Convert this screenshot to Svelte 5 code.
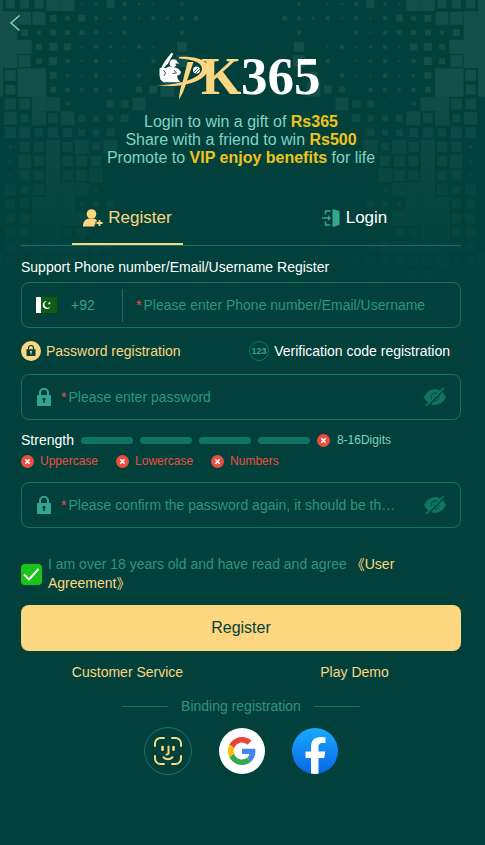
<script lang="ts">
  type Method = 'password' | 'code';

  let tab = $state<'register' | 'login'>('register');
  let method = $state<Method>('password');
  let account = $state('');
  let password = $state('');
  let confirmation = $state('');
  let showPassword = $state(false);
  let showConfirmation = $state(false);
  let agreed = $state(true);

  const rules = ['Uppercase', 'Lowercase', 'Numbers'];

  // Mosaic backdrop: one hex digit per cell, giving the side of the square.
  // Only the left half is listed, the right half mirrors it.
  const mosaic = [
    'f999ee23842203',
    'ffdd75742424345',
    'ff7465542400040',
    'fff687243242 a',
    'ffc6842432 43c',
    'fbff7324224 8',
    'faff64344 68e',
    '0bbfe42278d',
    '0d8fae7668',
    '0bb8a9768',
    '03aaeae8e',
    '03dafaba',
    '03a9fabe',
    '0b8bffe4',
    '099fff467',
    '099ffff4',
    '0a9ff8932',
    '099ffeda8',
    'fa7eabb9a7',
    'fab9ccaa8',
  ];
  const pitch = 14.3;
  const axis = 240.5;

  const tiles = mosaic.flatMap((row, r) =>
    [...row].flatMap((cell, c) => {
      const side = parseInt(cell, 16) || 0;
      if (!side) return [];
      const size = side === 15 ? pitch : side;
      const cx = -4 + c * pitch;
      const y = 4 + r * 14.28 - size / 2;
      const opacity = r < 7 ? 0.07 : Math.max(0.005, 0.058 - (r - 7) * 0.0042);
      return [
        { x: cx - size / 2, y, size, opacity },
        { x: 2 * axis - cx - size / 2, y, size, opacity },
      ];
    })
  );
</script>

{#snippet lock()}
  <svg class="lock" viewBox="0 0 14 18" width="14" height="18" aria-hidden="true">
    <path d="M3 8V4.8a4 4 0 0 1 8 0V8" fill="none" stroke="currentColor" stroke-width="2" />
    <path
      fill="currentColor"
      fill-rule="evenodd"
      d="M1 7h12a1 1 0 0 1 1 1v9a1 1 0 0 1-1 1H1a1 1 0 0 1-1-1V8a1 1 0 0 1 1-1Zm6 2.8a1.6 1.6 0 0 0-.8 3V15h1.6v-2.2a1.6 1.6 0 0 0-.8-3Z"
    />
  </svg>
{/snippet}

{#snippet eye()}
  <svg viewBox="0 0 24 20" width="24" height="20" aria-hidden="true">
    <path
      fill="currentColor"
      fill-rule="evenodd"
      d="M1 10C3.400 4.800 7.200 2.200 12 2.200S20.600 4.800 23 10C20.600 15.200 16.800 17.800 12 17.800S3.400 15.200 1 10ZM12 5.600a4.400 4.400 0 1 0 0 8.800 4.400 4.400 0 0 0 0-8.800Z"
    />
    <circle cx="12" cy="10" r="2.500" fill="none" stroke="currentColor" stroke-width="2" />
    <path d="M4.200 19.500 21.200 2" stroke="#02413b" stroke-width="2" />
    <path d="M3 18.800 21 .8" stroke="currentColor" stroke-width="1.800" />
  </svg>
{/snippet}

{#snippet cross()}
  <svg class="cross" viewBox="0 0 13 13" width="13" height="13" aria-hidden="true">
    <circle cx="6.500" cy="6.500" r="6.500" fill="#ea4e3d" />
    <path d="m4.300 4.300 4.400 4.400m0-4.400-4.400 4.400" stroke="#fff" stroke-width="1.600" />
  </svg>
{/snippet}

<main class="page">
  <svg class="mosaic" viewBox="0 0 485 300" aria-hidden="true">
    {#each tiles as t}
      <rect x={t.x} y={t.y} width={t.size} height={t.size} fill="#fff" fill-opacity={t.opacity} />
    {/each}
  </svg>

  <header class="topbar">
    <button class="back" type="button" aria-label="Back">
      <svg viewBox="0 0 12 18" width="12" height="18" aria-hidden="true">
        <path d="M10.500 1.500 2 9l8.500 7.500" fill="none" stroke="#7fd3c4" stroke-width="1.500" />
      </svg>
    </button>
  </header>

  <div class="content">
    <svg class="logo" viewBox="0 -8 168 66" width="168" height="66" role="img" aria-label="PK365">
      <g fill="#fff">
        <path d="m14.500.8 1.800 1L11 11.500 6.500 16l-1.800-1.200L8 9Z" />
        <path d="M12.500 12c0-3 1.800-4.800 4.200-4.800 2 0 3.300 1.300 3.600 2.800l2.200 1.500h-4l.5 2.500-2.500 1.200c-2 0-4-1.200-4-3.200Z" />
        <path d="m2.500 16.500 3-1.500 3 1 4-1.500 4 .5 5 1.700 2.500 3.300-1 2.500-3 1.200.8 3.200 2.800 3.400H6.500l-3-2.600-1-4.500Z" />
      </g>
      <path d="m6.500 18 2 3-1.500 3m10-6 2.500 3-4 .5" fill="none" stroke="#02413b" stroke-width=".8" />
      <path d="M22 5C40 4 52 9 51 17 50 29 25 37 0 33 22 33.500 44 26 45 17.500 45.500 11 38 7.500 22 6.500Z" fill="#fdd680" />
      <path d="M30.500 10h6L29.500 30c-2 7-4.500 13-7.500 17.500 0-5 1.500-12 4-19Z" fill="#fdd680" />
      <circle cx="39.500" cy="18" r="3.500" fill="#fff" />
      <path d="m37 20 4-4m-2 5 4-4" stroke="#02413b" stroke-width=".8" />
      <text class="logo-text" x="44" y="42" font-size="52" fill="#fdd680">K</text>
      <text class="logo-text" x="84" y="42" font-size="53" fill="#fff">365</text>
    </svg>

    <p class="promo">
      Login to win a gift of <strong>Rs365</strong><br />
      Share with a friend to win <strong>Rs500</strong><br />
      Promote to <strong>VIP enjoy benefits</strong> for life
    </p>

    <div class="tabs">
      <div class="pair" role="tablist">
        <button
          class="tab"
          class:active={tab === 'register'}
          type="button"
          role="tab"
          aria-selected={tab === 'register'}
          onclick={() => (tab = 'register')}
        >
          <svg viewBox="0 0 20 18" width="20" height="18" aria-hidden="true">
            <circle cx="8.500" cy="5" r="4.800" fill="currentColor" />
            <path fill="currentColor" d="M5.500 9.800h6c1.500.7 2.400 1.600 2.800 2.700h-1.800v3h-1V17.500H0C0 13 2 10.500 5.500 9.800Z" />
            <path d="M16.500 11v6m-3-3h6" stroke="currentColor" stroke-width="1.800" />
          </svg>
          Register
        </button>
        <button
          class="tab"
          class:active={tab === 'login'}
          type="button"
          role="tab"
          aria-selected={tab === 'login'}
          onclick={() => (tab = 'login')}
        >
          <svg class="door" viewBox="0 0 19 18" width="19" height="18" aria-hidden="true">
            <path d="M3.500 5.500V2h5m0 14h-5v-3.500M0 9h7" fill="none" stroke="currentColor" stroke-width="1.500" />
            <path d="m6 6 3 3-3 3Z" fill="currentColor" />
            <path d="m10.500 0 7 2v14l-7 2Z" fill="currentColor" />
          </svg>
          Login
        </button>
      </div>
    </div>

    <form onsubmit={(e) => e.preventDefault()}>
      <label class="caption" for="account">Support Phone number/Email/Username Register</label>
      <div class="field">
        <button class="country" type="button" aria-label="Country code +92">
          <svg viewBox="0 0 21 16" width="21" height="16" aria-hidden="true">
            <path fill="#0c5e10" d="M0 0h21v16H0z" />
            <path fill="#fff" d="M0 0h5v16H0z" />
            <path fill="#fff" d="M11.500 4a4 4 0 1 0 3 5.500A3.400 3.400 0 1 1 11.500 4ZM13 4.500l.6 1.200 1.400-.3-.9 1 .6 1.100-1.200-.5-1 .8.200-1.300-1.200-.6 1.300-.2Z" />
          </svg>
          <span>+92</span>
        </button>
        <span class="star">*</span>
        <input id="account" type="text" placeholder="Please enter Phone number/Email/Username" bind:value={account} />
      </div>

      <div class="methods">
        <label class="method" class:chosen={method === 'password'}>
          <input class="hidden-radio" type="radio" name="method" value="password" bind:group={method} />
          <svg viewBox="0 0 20 20" width="20" height="20" aria-hidden="true">
            <circle cx="10" cy="10" r="10" fill="#fdd680" />
            <path d="M7.500 8.500V7a2.500 2.500 0 0 1 5 0v1.500" fill="none" stroke="#02413b" stroke-width="1.200" />
            <path fill="#02413b" fill-rule="evenodd" d="M5.500 8.200h9V15h-9Zm4.500 1.500a1 1 0 0 0-.5 1.900v1.600h1v-1.600a1 1 0 0 0-.5-1.900Z" />
          </svg>
          Password registration
        </label>
        <label class="method" class:chosen={method === 'code'}>
          <input class="hidden-radio" type="radio" name="method" value="code" bind:group={method} />
          <span class="digits" aria-hidden="true">123</span>
          Verification code registration
        </label>
      </div>

      <div class="field secret">
        {@render lock()}
        <span class="star">*</span>
        <input
          type={showPassword ? 'text' : 'password'}
          aria-label="Password"
          placeholder="Please enter password"
          bind:value={password}
        />
        <button class="eye" type="button" aria-label="Show password" onclick={() => (showPassword = !showPassword)}>
          {@render eye()}
        </button>
      </div>

      <div class="strength">
        <span class="strength-label">Strength</span>
        {#each [1, 2, 3, 4] as step (step)}
          <span class="bar"></span>
        {/each}
        {@render cross()}
        <span class="length">8-16Digits</span>
      </div>
      <ul class="rules">
        {#each rules as rule}
          <li>{@render cross()}{rule}</li>
        {/each}
      </ul>

      <div class="field secret">
        {@render lock()}
        <span class="star">*</span>
        <input
          type={showConfirmation ? 'text' : 'password'}
          aria-label="Confirm password"
          placeholder="Please confirm the password again, it should be the same"
          bind:value={confirmation}
        />
        <button class="eye" type="button" aria-label="Show confirmation" onclick={() => (showConfirmation = !showConfirmation)}>
          {@render eye()}
        </button>
      </div>

      <div class="agree">
        <span class="tick">
          <input id="agree" type="checkbox" bind:checked={agreed} />
          {#if agreed}
            <svg viewBox="0 0 21 21" width="21" height="21" aria-hidden="true">
              <path d="m3 10.500 5 5L17.500 5" fill="none" stroke="#fff" stroke-width="2" />
            </svg>
          {/if}
        </span>
        <label for="agree">
          I am over 18 years old and have read and agree <a href="#agreement">《User Agreement》</a>
        </label>
      </div>

      <button class="submit" type="submit">Register</button>
    </form>

    <nav class="pair links">
      <a href="#service">Customer Service</a>
      <a href="#demo">Play Demo</a>
    </nav>

    <div class="binding">Binding registration</div>

    <div class="providers">
      <button class="provider face" type="button" aria-label="Face ID">
        <svg viewBox="0 0 28 28" width="28" height="28" aria-hidden="true">
          <g fill="none" stroke="#fdd680" stroke-width="2" stroke-linecap="round">
            <path d="M1 9V6.500A5.500 5.500 0 0 1 6.500 1H10M18 1h3.500A5.500 5.500 0 0 1 27 6.500V9M27 19v2.500a5.500 5.500 0 0 1-5.500 5.500H18M10 27H6.500A5.500 5.500 0 0 1 1 21.500V19" />
            <path d="M8.500 10v2.800M19.500 10v2.800" stroke-width="2.600" />
            <path d="M14.500 9.500v6.300c0 1-.6 1.600-2 1.600M9.500 20.300c2.500 2.500 6.500 2.500 9 0" />
          </g>
        </svg>
      </button>
      <button class="provider google" type="button" aria-label="Google">
        <svg viewBox="0 0 48 48" width="28" height="28" aria-hidden="true">
          <path fill="#EA4335" d="M24 9.500c3.540 0 6.710 1.220 9.210 3.600l6.850-6.850C35.900 2.380 30.470 0 24 0 14.620 0 6.510 5.380 2.560 13.220l7.980 6.190C12.430 13.720 17.740 9.500 24 9.500z" />
          <path fill="#4285F4" d="M46.980 24.550c0-1.570-.15-3.090-.38-4.550H24v9.020h12.940c-.58 2.960-2.260 5.480-4.780 7.180l7.730 6c4.510-4.180 7.090-10.360 7.090-17.650z" />
          <path fill="#FBBC05" d="M10.530 28.590c-.48-1.450-.76-2.990-.76-4.590s.27-3.140.76-4.590l-7.980-6.190C.92 16.460 0 20.120 0 24c0 3.880.92 7.540 2.560 10.780l7.970-6.190z" />
          <path fill="#34A853" d="M24 48c6.480 0 11.930-2.130 15.890-5.810l-7.730-6c-2.150 1.450-4.920 2.300-8.160 2.300-6.260 0-11.570-4.220-13.470-9.910l-7.980 6.190C6.510 42.620 14.620 48 24 48z" />
        </svg>
      </button>
      <button class="provider facebook" type="button" aria-label="Facebook">
        <svg viewBox="0 0 46 46" width="46" height="46" aria-hidden="true">
          <path fill="#fff" d="M19 46V30h-5.500v-6.500H19V19c0-6.500 3.500-10 9.500-10 2 0 3.800.2 5 .5V15h-3c-3.200 0-4 1.800-4 4.200v4.300h6.800L32.200 30h-5.700v16Z" />
        </svg>
      </button>
    </div>
  </div>
</main>

<style>
  :global(body) {
    background: #02413b;
  }

  .page {
    position: relative;
    min-height: 100vh;
    box-sizing: border-box;
    background: #02413b;
    font-family: 'Liberation Sans', Arial, 'Noto Sans CJK SC', sans-serif;
    font-size: 14px;
    color: #fff;
    overflow: hidden;
  }

  .mosaic {
    position: absolute;
    top: 0;
    left: 0;
    width: 100%;
  }

  button {
    padding: 0;
    border: 0;
    background: none;
    color: inherit;
    font: inherit;
    cursor: pointer;
  }

  svg {
    display: block;
    flex: none;
  }

  a {
    color: #fdd680;
    text-decoration: none;
  }

  .topbar {
    position: relative;
    display: flex;
    align-items: center;
    box-sizing: border-box;
    height: 44px;
    padding: 2px 9px 0;
  }

  .content {
    position: relative;
    padding: 0 24px 24px 21px;
  }

  .logo {
    margin: 0 auto;
  }

  .logo-text {
    font-family: 'Liberation Serif', 'Times New Roman', serif;
    font-weight: bold;
  }

  .promo {
    margin: 3px 0 0;
    text-align: center;
    font-size: 16px;
    line-height: 18px;
    color: #7fd3c4;
  }

  .promo strong {
    color: #f0c419;
  }

  .tabs {
    margin-top: 26px;
    border-bottom: 1px solid #0f7465;
  }

  .pair {
    display: grid;
    grid-template-columns: 1fr 1fr;
    justify-items: center;
    margin: 0 -7px;
  }

  .tab {
    display: flex;
    align-items: center;
    justify-content: center;
    gap: 5px;
    min-width: 111px;
    height: 52px;
    border-bottom: 2px solid transparent;
    font-size: 17px;
  }

  .tab.active {
    color: #fdd680;
    border-color: #fdd680;
  }

  .door {
    color: #37a392;
  }

  .caption {
    display: block;
    margin-top: 12px;
    line-height: 18px;
  }

  .field {
    display: flex;
    align-items: center;
    box-sizing: border-box;
    height: 46px;
    margin-top: 6px;
    padding: 0 13px 0 14px;
    border: 1px solid #0f7465;
    border-radius: 8px;
    background: #02413b;
    color: #37a392;
  }

  .field input {
    flex: 1;
    min-width: 0;
    padding: 0;
    border: 0;
    outline: none;
    background: none;
    color: #fff;
    font: inherit;
    text-overflow: ellipsis;
  }

  .field input::placeholder {
    color: #2f9384;
    opacity: 1;
  }

  .star {
    margin-right: 2px;
    color: #ea4e3d;
  }

  .country {
    display: flex;
    align-items: center;
    gap: 14px;
    width: 87px;
    height: 33px;
    margin-right: 13px;
    border-right: 1px solid #0f7465;
  }

  .methods {
    display: flex;
    justify-content: space-between;
    margin-top: 13px;
    padding-right: 11px;
  }

  .method {
    display: flex;
    align-items: center;
    gap: 5px;
    height: 20px;
    cursor: pointer;
  }

  .method.chosen {
    color: #fdd680;
  }

  .hidden-radio {
    position: absolute;
    opacity: 0;
  }

  .digits {
    box-sizing: border-box;
    width: 20px;
    height: 20px;
    border: 1px solid #0f7465;
    border-radius: 50%;
    color: #37a392;
    font-size: 9px;
    font-weight: bold;
    line-height: 18px;
    text-align: center;
  }

  .secret {
    margin-top: 13px;
    padding-left: 15px;
  }

  .lock {
    margin-right: 10px;
  }

  .eye {
    margin-left: 24px;
    color: #0f7465;
  }

  .strength {
    display: flex;
    align-items: center;
    gap: 7px;
    height: 18px;
    margin-top: 11px;
  }

  .bar {
    flex: 0 1 52px;
    height: 7px;
    border-radius: 4px;
    background: #0f7465;
  }

  .length {
    font-size: 12px;
    color: #7fd3c4;
  }

  .rules {
    display: flex;
    gap: 18px;
    margin: 4px 0 0;
    padding: 0;
    list-style: none;
    font-size: 12px;
    line-height: 16px;
    color: #ea4e3d;
  }

  .rules li {
    display: flex;
    align-items: center;
    gap: 6px;
  }

  .agree {
    display: flex;
    align-items: center;
    gap: 6px;
    margin-top: 27px;
    line-height: 19px;
    color: #2f9384;
  }

  .agree label {
    flex: 1;
    padding-right: 44px;
  }

  .tick {
    display: grid;
  }

  .tick > * {
    grid-area: 1 / 1;
  }

  .tick svg {
    pointer-events: none;
  }

  .tick input {
    appearance: none;
    width: 21px;
    height: 21px;
    margin: 0;
    border-radius: 4px;
    background: #1ac41a;
  }

  .submit {
    display: block;
    width: 100%;
    height: 46px;
    margin-top: 12px;
    border-radius: 8px;
    background: #fdd680;
    color: #02413b;
    font-size: 16px;
  }

  .links {
    margin-top: 12px;
    line-height: 18px;
  }

  .binding {
    display: flex;
    align-items: center;
    justify-content: center;
    gap: 13px;
    margin-top: 16px;
    line-height: 18px;
    color: #2f9384;
  }

  .binding::before,
  .binding::after {
    content: '';
    width: 46px;
    border-top: 1px solid #0f7465;
  }

  .providers {
    display: flex;
    align-items: center;
    justify-content: center;
    gap: 27px;
    margin-top: 12px;
  }

  .provider {
    display: flex;
    align-items: center;
    justify-content: center;
    width: 46px;
    height: 46px;
    border-radius: 50%;
    overflow: hidden;
  }

  .face {
    width: 48px;
    height: 48px;
    border: 1px solid #0f7465;
  }

  .google {
    background: #fff;
  }

  .facebook {
    background: linear-gradient(#19aafe, #0866e4);
  }
</style>
